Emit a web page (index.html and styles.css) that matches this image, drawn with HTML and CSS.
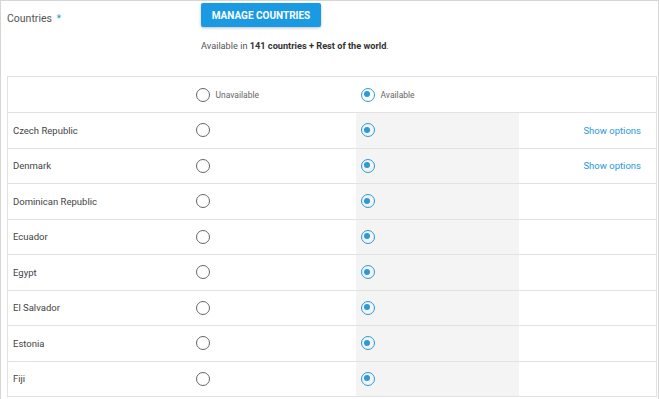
FILE: index.html
```html
<!DOCTYPE html>
<html lang="en">
<head>
    <meta charset="UTF-8">
    <title>Countries</title>
    <link rel="stylesheet" href="styles.css">
</head>
<body>
    <div class="frame">
        <div class="field">
            <label class="field-label">Countries <span class="req">*</span></label>
            <div class="field-body">
                <button class="btn-primary">MANAGE COUNTRIES</button>
                <p class="summary">Available in <strong>141 countries + Rest of the world</strong>.</p>
            </div>
        </div>

        <table class="countries">
            <colgroup>
                <col class="c-name">
                <col class="c-off">
                <col class="c-on">
                <col class="c-opt">
            </colgroup>
            <thead>
                <tr>
                    <th></th>
                    <th><span class="radio"></span><span class="radio-label">Unavailable</span></th>
                    <th><span class="radio checked"></span><span class="radio-label">Available</span></th>
                    <th></th>
                </tr>
            </thead>
            <tbody>
                <tr>
                    <td>Czech Republic</td>
                    <td><span class="radio"></span></td>
                    <td class="on"><span class="radio checked"></span></td>
                    <td class="opt"><a href="#">Show options</a></td>
                </tr>
                <tr>
                    <td>Denmark</td>
                    <td><span class="radio"></span></td>
                    <td class="on"><span class="radio checked"></span></td>
                    <td class="opt"><a href="#">Show options</a></td>
                </tr>
                <tr>
                    <td>Dominican Republic</td>
                    <td><span class="radio"></span></td>
                    <td class="on"><span class="radio checked"></span></td>
                    <td class="opt"></td>
                </tr>
                <tr>
                    <td>Ecuador</td>
                    <td><span class="radio"></span></td>
                    <td class="on"><span class="radio checked"></span></td>
                    <td class="opt"></td>
                </tr>
                <tr>
                    <td>Egypt</td>
                    <td><span class="radio"></span></td>
                    <td class="on"><span class="radio checked"></span></td>
                    <td class="opt"></td>
                </tr>
                <tr>
                    <td>El Salvador</td>
                    <td><span class="radio"></span></td>
                    <td class="on"><span class="radio checked"></span></td>
                    <td class="opt"></td>
                </tr>
                <tr>
                    <td>Estonia</td>
                    <td><span class="radio"></span></td>
                    <td class="on"><span class="radio checked"></span></td>
                    <td class="opt"></td>
                </tr>
                <tr>
                    <td>Fiji</td>
                    <td><span class="radio"></span></td>
                    <td class="on"><span class="radio checked"></span></td>
                    <td class="opt"></td>
                </tr>
            </tbody>
        </table>
    </div>
</body>
</html>
```

FILE: styles.css
```css
a {
    text-decoration: none;
}

body {
    margin: 0;
    font-family: Roboto, 'Liberation Sans', sans-serif;
    color: #444;
    background-color: #fff;
    overflow: hidden;
}

.frame {
    height: 399px;
    box-sizing: border-box;
    border: 1px solid #d6d6d6;
    border-bottom: none;
    padding: 2px 0 0 6px;
}

.field {
    display: grid;
    grid-template-columns: 194px 1fr;
}
.field-label {
    font-size: 10.5px;
    color: #555;
    padding-top: 9px;
}
.req {
    color: #2a9ad8;
    margin-left: 2px;
}

.btn-primary {
    display: block;
    height: 24px;
    width: 120px;
    padding: 0;
    border: none;
    border-radius: 2px;
    background-color: #1b9ae4;
    color: #fff;
    font-family: Roboto, sans-serif;
    font-size: 10px;
    font-weight: bold;
    box-shadow: 0 1px 3px rgba(0, 0, 0, 0.25);
}
.summary {
    margin: 13px 0 0 0;
    font-size: 9.2px;
    color: #555;
}
.summary strong {
    color: #333;
}

.countries {
    margin-top: 25px;
    width: 649px;
    border-collapse: collapse;
    table-layout: fixed;
    border: 1px solid #e2e2e2;
}
.c-name { width: 183px; }
.c-off { width: 165px; }
.c-on { width: 163px; }
.c-opt { width: 138px; }

.countries th,
.countries td {
    height: 35.5px;
    padding: 0 5px;
    box-sizing: border-box;
    border-top: 1px solid #e2e2e2;
    text-align: left;
    vertical-align: middle;
    font-weight: normal;
    font-size: 9.5px;
}
.countries th {
    height: 36px;
}
.countries td.on {
    background-color: #f4f4f4;
}
.countries td.opt {
    text-align: right;
    padding-right: 15px;
}
.opt a {
    color: #2a9ad8;
    font-size: 9.5px;
}

.radio {
    display: inline-block;
    width: 14px;
    height: 14px;
    box-sizing: border-box;
    border: 1.5px solid #666;
    border-radius: 50%;
    vertical-align: middle;
    position: relative;
}
.radio.checked {
    border-color: #2a9ad8;
}
.radio.checked::after {
    content: "";
    position: absolute;
    top: 2.5px;
    left: 2.5px;
    width: 6px;
    height: 6px;
    border-radius: 50%;
    background-color: #2a9ad8;
}
.radio-label {
    margin-left: 6px;
    font-size: 8.5px;
    color: #666;
    vertical-align: middle;
}
```
